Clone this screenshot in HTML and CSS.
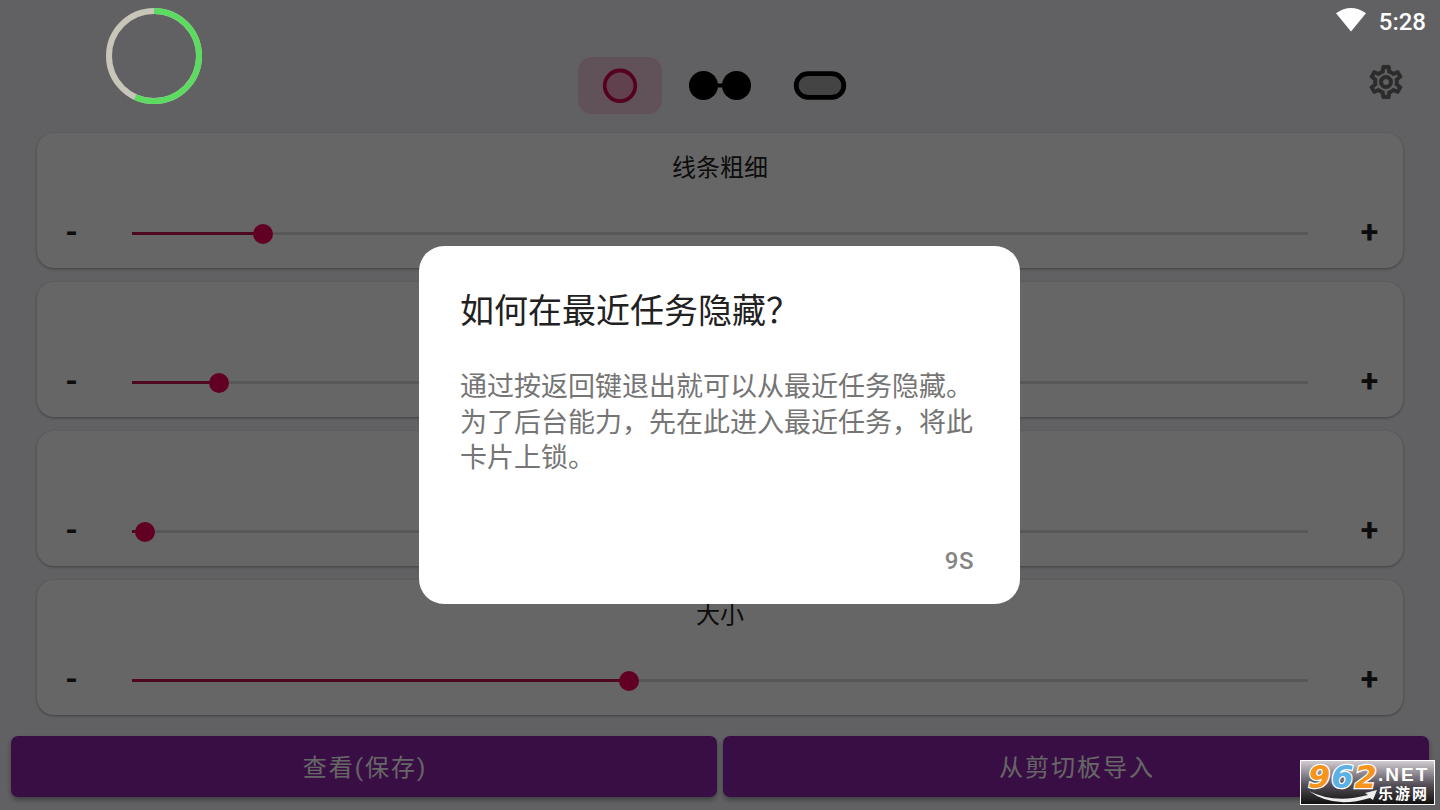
FILE: index.html
```html
<!DOCTYPE html>
<html lang="zh-CN">
<head>
    <meta charset="UTF-8">
    <meta name="viewport" content="width=device-width, initial-scale=1.0">
    <title>线条粗细</title>
    <link rel="stylesheet" href="styles.css">
</head>
<body>
    <div class="page">
        <!-- Shape tabs -->
        <div class="header">
            <div class="tabs">
                <div class="tab selected">
                    <svg width="36" height="36" viewBox="0 0 36 36"><circle cx="18" cy="17.8" r="15.3" fill="#f50057" fill-opacity="0.2" stroke="#d80050" stroke-width="3.8"/></svg>
                </div>
                <div class="tab">
                    <svg width="64" height="32" viewBox="0 0 64 32"><circle cx="15.5" cy="15.5" r="14.5"/><circle cx="48.5" cy="15.5" r="14.5"/><path d="M28 15.5h8" stroke="#000" stroke-width="4"/></svg>
                </div>
                <div class="tab">
                    <svg width="54" height="30" viewBox="0 0 54 30"><rect x="3.2" y="2.6" width="47.6" height="23.8" rx="11.9" fill="#aaa" stroke="#000" stroke-width="4.8"/></svg>
                </div>
            </div>
            <svg class="gear" width="40" height="40" viewBox="0 0 24 24" fill="#6b6b6b" stroke="#6b6b6b" stroke-width="0.4"><path d="M19.43 12.98c.04-.32.07-.64.07-.98s-.03-.66-.07-.98l2.11-1.65c.19-.15.24-.42.12-.64l-2-3.46c-.09-.16-.26-.25-.44-.25-.06 0-.12.01-.17.03l-2.49 1c-.52-.4-1.08-.73-1.69-.98l-.38-2.65C14.46 2.18 14.25 2 14 2h-4c-.25 0-.46.18-.49.42l-.38 2.65c-.61.25-1.17.59-1.69.98l-2.49-1c-.06-.02-.12-.03-.18-.03-.17 0-.34.09-.43.25l-2 3.46c-.13.22-.07.49.12.64l2.11 1.65c-.04.32-.07.65-.07.98s.03.66.07.98l-2.11 1.65c-.19.15-.24.42-.12.64l2 3.46c.09.16.26.25.44.25.06 0 .12-.01.17-.03l2.49-1c.52.4 1.08.73 1.69.98l.38 2.65c.03.24.24.42.49.42h4c.25 0 .46-.18.49-.42l.38-2.65c.61-.25 1.17-.59 1.69-.98l2.49 1c.06.02.12.03.18.03.17 0 .34-.09.43-.25l2-3.46c.12-.22.07-.49-.12-.64l-2.11-1.65zm-1.98-1.71c.04.31.05.52.05.73 0 .21-.02.43-.05.73l-.14 1.13.89.7 1.08.84-.7 1.21-1.27-.51-1.04-.42-.9.68c-.43.32-.84.56-1.25.73l-1.06.43-.16 1.13-.2 1.35h-1.4l-.19-1.35-.16-1.13-1.06-.43c-.43-.18-.83-.41-1.23-.71l-.91-.7-1.06.43-1.27.51-.7-1.21 1.08-.84.89-.7-.14-1.13c-.03-.31-.05-.54-.05-.74s.02-.43.05-.73l.14-1.13-.89-.7-1.08-.84.7-1.21 1.27.51 1.04.42.9-.68c.43-.32.84-.56 1.25-.73l1.06-.43.16-1.13.2-1.35h1.39l.19 1.35.16 1.13 1.06.43c.43.18.83.41 1.23.71l.91.7 1.06-.43 1.27-.51.7 1.21-1.07.85-.89.7.14 1.13zM12 8c-2.21 0-4 1.79-4 4s1.79 4 4 4 4-1.79 4-4-1.79-4-4-4zm0 6c-1.1 0-2-.9-2-2s.9-2 2-2 2 .9 2 2-.9 2-2 2z"/></svg>
        </div>

        <!-- Sliders -->
        <div class="cards">
            <div class="card">
                <div class="title">线条粗细</div>
                <div class="control">
                    <span class="step">-</span>
                    <div class="track"><div class="fill" style="width: 131px"></div><div class="thumb"></div></div>
                    <span class="step">+</span>
                </div>
            </div>
            <div class="card">
                <div class="title"></div>
                <div class="control">
                    <span class="step">-</span>
                    <div class="track"><div class="fill" style="width: 87px"></div><div class="thumb"></div></div>
                    <span class="step">+</span>
                </div>
            </div>
            <div class="card">
                <div class="title"></div>
                <div class="control">
                    <span class="step">-</span>
                    <div class="track"><div class="fill" style="width: 13px"></div><div class="thumb"></div></div>
                    <span class="step">+</span>
                </div>
            </div>
            <div class="card">
                <div class="title">大小</div>
                <div class="control">
                    <span class="step">-</span>
                    <div class="track"><div class="fill" style="width: 497px"></div><div class="thumb"></div></div>
                    <span class="step">+</span>
                </div>
            </div>
        </div>

        <div class="buttons">
            <button>查看(保存)</button>
            <button>从剪切板导入</button>
        </div>
    </div>

    <!-- Dialog -->
    <div class="scrim">
        <div class="dialog">
            <h2>如何在最近任务隐藏？</h2>
            <p>通过按返回键退出就可以从最近任务隐藏。<br>为了后台能力，先在此进入最近任务，将此<br>卡片上锁。</p>
            <div class="countdown">9S</div>
        </div>
    </div>

    <!-- Battery ring -->
    <svg class="ring" width="96" height="96" viewBox="0 0 96 96" fill="none" stroke-width="6">
        <circle cx="48" cy="48" r="45" stroke="#c8c5b9"/>
        <path d="M48 3A45 45 0 1 1 29.3 88.9" stroke="#5bdb60"/>
    </svg>

    <div class="status">
        <svg width="30" height="24" viewBox="0 0 30 24" fill="#fff"><path d="M0 5.2Q15-5.2 30 5.2L15 23.5z"/></svg>
        <span>5:28</span>
    </div>

    <div class="watermark">
        <svg class="swoosh" width="70" height="14" viewBox="0 0 70 14"><path d="M1 1Q26 14 60 5L57 3L69 0L65 10L62 8Q25 19 1 1z" fill="#eee"/></svg>
        <div class="digits"><span>9</span><span class="blue">6</span><span>2</span></div>
        <div class="site"><div class="net">.NET</div><div class="name">乐游网</div></div>
    </div>
</body>
</html>
```

FILE: styles.css
```css
* {
    box-sizing: border-box;
}

body {
    margin: 0;
    height: 810px;
    overflow: hidden;
    font-family: Roboto, "Noto Sans CJK SC", sans-serif;
    background-color: #f3f2f7;
    color: #212121;
}

.page {
    height: 810px;
}

.header {
    height: 133px;
    padding: 57px 34px 0 578px;
    display: flex;
    justify-content: space-between;
}

.tabs {
    display: flex;
    gap: 16px;
}

.tab {
    width: 84px;
    height: 57px;
    border-radius: 14px;
    display: flex;
    justify-content: center;
    align-items: center;
}

.tab.selected {
    background-color: #f2cbdb;
}

.gear {
    margin-top: 5px;
}

.cards {
    display: flex;
    flex-direction: column;
    gap: 14px;
    padding: 0 37px;
}

.card {
    height: 135px;
    border-radius: 17px;
    background-color: #fff;
    box-shadow: 0 1px 3px rgba(0, 0, 0, 0.35);
}

.title {
    height: 69px;
    padding-top: 1px;
    line-height: 69px;
    font-size: 24px;
    text-align: center;
}

.control {
    height: 63px;
    display: flex;
    align-items: center;
}

.step {
    width: 68px;
    padding: 0 0 3px 1px;
    font-size: 32px;
    font-weight: bold;
    text-align: center;
}

.track {
    flex: 1;
    height: 3px;
    margin: 0 27px;
    background-color: #dbdbdb;
    display: flex;
    align-items: center;
}

.fill {
    height: 3px;
    background-color: #c4184f;
}

.thumb {
    width: 20px;
    height: 20px;
    margin: 1px 0 0 -10px;
    flex-shrink: 0;
    border-radius: 50%;
    background-color: #f50057;
}

.buttons {
    display: flex;
    gap: 6px;
    padding: 21px 11px 0;
}

button {
    flex: 1;
    height: 61px;
    padding: 0 0 2px 2px;
    border: none;
    border-radius: 7px;
    background-color: #8e24aa;
    color: #fff;
    font-family: inherit;
    font-size: 24px;
    letter-spacing: 2px;
    box-shadow: 0 3px 5px rgba(0, 0, 0, 0.35);
}

.scrim {
    position: absolute;
    inset: 0;
    background-color: rgba(0, 0, 0, 0.6);
    display: flex;
    padding: 246px 0 0 419px;
}

.dialog {
    width: 601px;
    height: 358px;
    padding: 40px 41px 0;
    border-radius: 25px;
    background-color: #fff;
}

h2 {
    margin: 0;
    height: 50px;
    line-height: 50px;
    font-size: 34px;
    font-weight: normal;
}

p {
    margin: 34px 0 0;
    font-size: 27px;
    line-height: 35.5px;
    color: #757575;
    white-space: nowrap;
}

.countdown {
    margin: 70px 5px 0 0;
    font-size: 24px;
    line-height: 28px;
    font-weight: 500;
    letter-spacing: 0.5px;
    text-align: right;
    color: #848484;
}

.ring {
    position: absolute;
    left: 106px;
    top: 8px;
}

.status {
    position: absolute;
    right: 14px;
    top: 8px;
    display: flex;
    gap: 13px;
    font-size: 24px;
    font-weight: 500;
    line-height: 28px;
    color: #fff;
}

.watermark {
    position: absolute;
    left: 1300px;
    top: 760px;
    width: 135px;
    height: 45px;
    border: 1px solid #fff;
    background-image: linear-gradient(#d0ccd2, #554f57 55%, #111);
    color: #fff;
    display: flex;
}

.digits {
    width: 77px;
    padding: 1px 0 0 7px;
    font: italic bold 32px/30px "DejaVu Sans", sans-serif;
    letter-spacing: 1px;
    color: #f7941e;
    -webkit-text-stroke: 2.5px #fff;
    paint-order: stroke fill;
}

.digits .blue {
    color: #5bb0e6;
}

.swoosh {
    position: absolute;
    left: 7px;
    top: 29px;
}

.net {
    padding-top: 3px;
    font: bold 19px/22px "Liberation Sans", sans-serif;
    letter-spacing: 2px;
}

.name {
    font-size: 15px;
    font-weight: bold;
    line-height: 17px;
    letter-spacing: 2px;
}
```
